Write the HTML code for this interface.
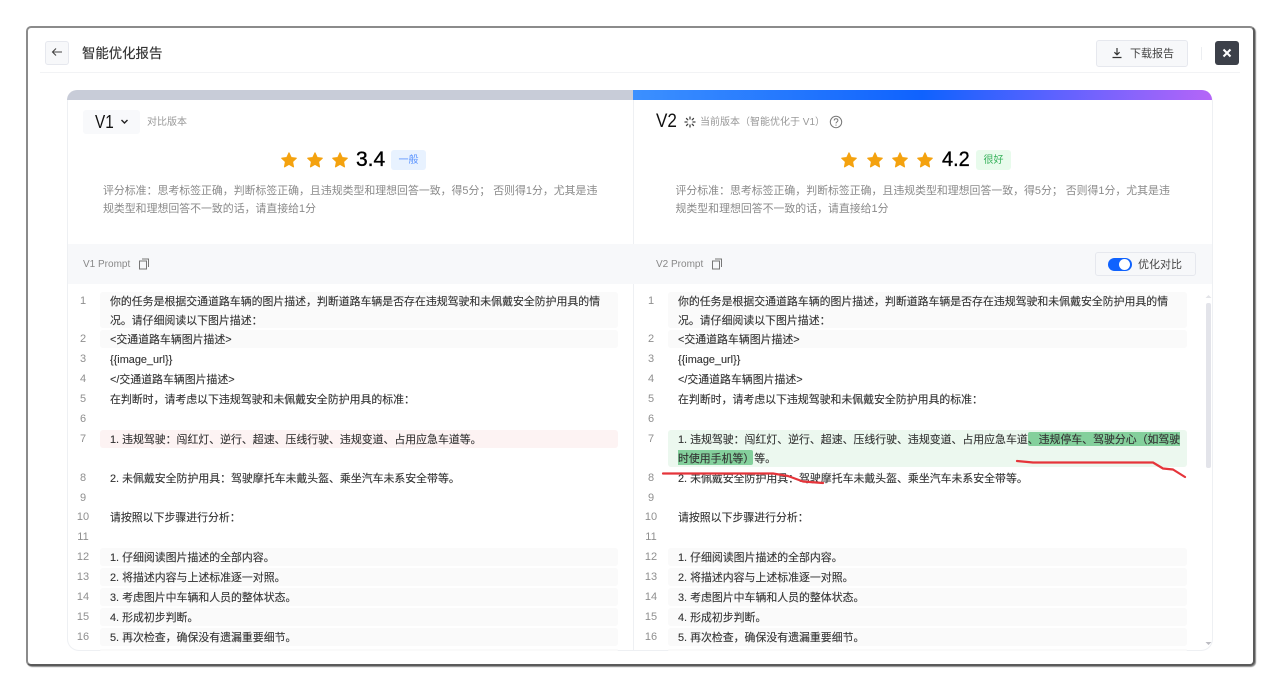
<!DOCTYPE html>
<html lang="zh"><head><meta charset="utf-8"><title>智能优化报告</title>
<style>
*{box-sizing:border-box;margin:0;padding:0}
html,body{width:1280px;height:691px;background:#fff;overflow:hidden}
body{position:relative;font-family:"Liberation Sans","Noto Sans CJK SC",sans-serif;color:#333}
.a{position:absolute;white-space:nowrap}
#win{position:absolute;left:26px;top:26px;width:1229px;height:640px;background:#fff;border:2px solid #8b8b8b;border-right-color:#5a5a5a;border-bottom-color:#5a5a5a;border-radius:5px;box-shadow:1px 1px 1px #888}
.btn{background:#f7f8fa;border:1px solid #e6e8ee;border-radius:3px}
#panel{position:absolute;left:67px;top:90px;width:1146px;height:561px;border:1px solid #eef0f3;border-top:0;border-radius:12px;overflow:hidden;background:#fff}
.t{font-size:10.9px;line-height:20px;color:#333;margin-top:1px;-webkit-text-stroke:.12px #333}
.n{font-size:11px;line-height:20px;color:#8f8f8f;width:24px;text-align:center;margin-top:1px}
.r{position:absolute;background:#fafafa;border-radius:3px}
.c{font-size:10.9px;line-height:20px;color:#8a8a8a}
.star{position:absolute;top:151px;width:18px;height:18px}
.big{font-size:21px;line-height:24px;color:#000;-webkit-text-stroke:.35px #000}
</style></head><body>
<div id="win"></div>

<div class="a btn" style="left:45px;top:41px;width:24px;height:24px"></div>
<svg class="a" style="left:51px;top:46px" width="12" height="12" viewBox="0 0 12 12" fill="none" stroke="#444" stroke-width="1.1"><path d="M11 6H1.500M5 2.500L1.500 6 5 9.500"/></svg>
<div class="a" style="left:82px;top:44px;font-size:13.4px;line-height:20px;color:#333;-webkit-text-stroke:.15px #333">智能优化报告</div>
<div class="a" style="left:40px;top:72px;width:1200px;height:1px;background:#f2f3f5"></div>

<div class="a btn" style="left:1096px;top:40px;width:92px;height:27px"></div>
<svg class="a" style="left:1111px;top:47px" width="12" height="12" viewBox="0 0 12 12" fill="none" stroke="#333" stroke-width="1.2"><path d="M6 1v6.500M3.400 5.200L6 7.800l2.600-2.600M1.500 10.500h9"/></svg>
<div class="a" style="left:1130px;top:44px;font-size:11px;line-height:20px;color:#444">下载报告</div>
<div class="a" style="left:1201px;top:47px;width:1px;height:13px;background:#eceef1"></div>
<div class="a" style="left:1215px;top:41px;width:24px;height:24px;background:#3c4049;border-radius:3px"></div>
<svg class="a" style="left:1222px;top:48px" width="10" height="10" viewBox="0 0 10 10" stroke="#fff" stroke-width="2"><path d="M1.500 1.500l7 7M8.500 1.500l-7 7"/></svg>

<div id="panel"></div>
<div class="a" style="left:67px;top:90px;width:566px;height:10px;background:#c8ccd8;border-radius:12px 0 0 0"></div>
<div class="a" style="left:633px;top:90px;width:579px;height:10px;background:linear-gradient(90deg,#3c90ff 0%,#0f62fe 50%,#5a62ff 72%,#b565f8 100%);border-radius:0 12px 0 0"></div>
<div class="a" style="left:633px;top:100px;width:1px;height:551px;background:#eef0f3"></div>
<div class="a" style="left:68px;top:244px;width:1144px;height:40px;background:#f7f8fa"></div>

<!-- left head -->
<div class="a" style="left:83px;top:110px;width:57px;height:24px;background:#f8f9fb;border-radius:3px"></div>
<div class="a" style="left:95px;top:110px;font-size:18px;line-height:24px;color:#111;transform:scaleX(.85);transform-origin:left center">V1</div>
<svg class="a" style="left:120px;top:118px" width="9" height="8" viewBox="0 0 9 8" fill="none" stroke="#222" stroke-width="1.4"><path d="M1.500 2l3 3 3-3"/></svg>
<div class="a" style="left:147px;top:113px;font-size:10px;line-height:20px;color:#999">对比版本</div>

<svg class="star" style="left:280px" viewBox="0 0 24 24"><path fill="#f4a20f" stroke="#f4a20f" stroke-width="1.500" stroke-linejoin="round" d="M12 2.500l2.900 6.300 6.800.8-5 4.700 1.300 6.800-6-3.400-6 3.400 1.300-6.800-5-4.700 6.800-.8z"/></svg>
<svg class="star" style="left:306px" viewBox="0 0 24 24"><path fill="#f4a20f" stroke="#f4a20f" stroke-width="1.500" stroke-linejoin="round" d="M12 2.500l2.900 6.300 6.800.8-5 4.700 1.300 6.800-6-3.400-6 3.400 1.300-6.800-5-4.700 6.800-.8z"/></svg>
<svg class="star" style="left:331px" viewBox="0 0 24 24"><path fill="#f4a20f" stroke="#f4a20f" stroke-width="1.500" stroke-linejoin="round" d="M12 2.500l2.900 6.300 6.800.8-5 4.700 1.300 6.800-6-3.400-6 3.400 1.300-6.800-5-4.700 6.800-.8z"/></svg>
<div class="a big" style="left:356px;top:148px">3.4</div>
<div class="a" style="left:391px;top:150px;width:35px;height:20px;background:#e8f2ff;border-radius:3px;font-size:10px;line-height:21px;text-align:center;color:#5a93ff">一般</div>
<div class="a c" style="left:103px;top:181px">评分标准：思考标签正确，判断标签正确，且违规类型和理想回答一致，得5分； 否则得1分，尤其是违</div>
<div class="a c" style="left:103px;top:199px">规类型和理想回答不一致的话，请直接给1分</div>

<!-- right head -->
<div class="a" style="left:656px;top:110px;font-size:19px;line-height:24px;color:#111;transform:scaleX(.9);transform-origin:left center">V2</div>
<svg class="a" style="left:684px;top:116px" width="12" height="12" viewBox="0 0 12 12" stroke="#444" stroke-width="1.300" stroke-linecap="round"><path d="M6 1v2M6 9v2M1 6h2M9 6h2M2.500 2.500l1.300 1.300M8.200 8.200l1.300 1.300M9.500 2.500L8.200 3.800M3.800 8.200L2.500 9.500"/></svg>
<div class="a" style="left:700px;top:113px;font-size:10px;line-height:20px;color:#999">当前版本（智能优化于 V1）</div>
<svg class="a" style="left:829px;top:115px" width="14" height="14" viewBox="0 0 14 14" fill="none" stroke="#777" stroke-width="1"><circle cx="7" cy="7" r="5.700"/><path d="M5.200 5.500c0-2.300 3.700-2.300 3.700 0 0 1.400-1.900 1.400-1.900 2.900M7 9.600v1"/></svg>

<svg class="star" style="left:840px" viewBox="0 0 24 24"><path fill="#f4a20f" stroke="#f4a20f" stroke-width="1.500" stroke-linejoin="round" d="M12 2.500l2.900 6.300 6.800.8-5 4.700 1.300 6.800-6-3.400-6 3.400 1.300-6.800-5-4.700 6.800-.8z"/></svg>
<svg class="star" style="left:866px" viewBox="0 0 24 24"><path fill="#f4a20f" stroke="#f4a20f" stroke-width="1.500" stroke-linejoin="round" d="M12 2.500l2.900 6.300 6.800.8-5 4.700 1.300 6.800-6-3.400-6 3.400 1.300-6.800-5-4.700 6.800-.8z"/></svg>
<svg class="star" style="left:891px" viewBox="0 0 24 24"><path fill="#f4a20f" stroke="#f4a20f" stroke-width="1.500" stroke-linejoin="round" d="M12 2.500l2.900 6.300 6.800.8-5 4.700 1.300 6.800-6-3.400-6 3.400 1.300-6.800-5-4.700 6.800-.8z"/></svg>
<svg class="star" style="left:916px" viewBox="0 0 24 24"><path fill="#f4a20f" stroke="#f4a20f" stroke-width="1.500" stroke-linejoin="round" d="M12 2.500l2.900 6.300 6.800.8-5 4.700 1.300 6.800-6-3.400-6 3.400 1.300-6.800-5-4.700 6.800-.8z"/></svg>
<div class="a big" style="left:942px;top:148px;transform:scaleX(.95);transform-origin:left center">4.2</div>
<div class="a" style="left:976px;top:150px;width:35px;height:20px;background:#e8fbec;border-radius:3px;font-size:10px;line-height:21px;text-align:center;color:#38b25c">很好</div>
<div class="a c" style="left:675.500px;top:181px">评分标准：思考标签正确，判断标签正确，且违规类型和理想回答一致，得5分； 否则得1分，尤其是违</div>
<div class="a c" style="left:675.500px;top:199px">规类型和理想回答不一致的话，请直接给1分</div>

<!-- prompt bars -->
<div class="a" style="left:83px;top:255px;font-size:10px;line-height:20px;color:#888">V1 Prompt</div>
<svg class="a" style="left:138px;top:258px" width="12" height="12" viewBox="0 0 12 12" fill="none" stroke="#777" stroke-width="1"><rect x="1.500" y="3" width="7" height="8"/><path d="M4 1h6.500v8"/></svg>
<div class="a" style="left:656px;top:255px;font-size:10px;line-height:20px;color:#888">V2 Prompt</div>
<svg class="a" style="left:711px;top:258px" width="12" height="12" viewBox="0 0 12 12" fill="none" stroke="#777" stroke-width="1"><rect x="1.500" y="3" width="7" height="8"/><path d="M4 1h6.500v8"/></svg>
<div class="a btn" style="left:1095px;top:252px;width:101px;height:24px"></div>
<div class="a" style="left:1108px;top:258px;width:24px;height:13px;border-radius:7px;background:#0f62fe"></div>
<div class="a" style="left:1119px;top:259px;width:11px;height:11px;border-radius:50%;background:#fff"></div>
<div class="a" style="left:1138px;top:255px;font-size:11px;line-height:20px;color:#444">优化对比</div>

<!-- left rows -->
<div class="r" style="left:100px;top:292px;width:518px;height:36px"></div>
<div class="r" style="left:100px;top:330px;width:518px;height:18px"></div>
<div class="r" style="left:100px;top:430px;width:518px;height:18px;background:#fdf3f3"></div>
<div class="r" style="left:100px;top:548px;width:518px;height:18px"></div>
<div class="r" style="left:100px;top:568px;width:518px;height:18px"></div>
<div class="r" style="left:100px;top:588px;width:518px;height:18px"></div>
<div class="r" style="left:100px;top:608px;width:518px;height:18px"></div>
<div class="r" style="left:100px;top:628px;width:518px;height:18px"></div>
<div class="r" style="left:100px;top:649px;width:518px;height:2px"></div>

<!-- right rows -->
<div class="r" style="left:668px;top:292px;width:519px;height:36px"></div>
<div class="r" style="left:668px;top:330px;width:519px;height:18px"></div>
<div class="r" style="left:668px;top:430px;width:519px;height:37px;background:#ecf8ef"></div>
<div class="a" style="left:1028px;top:432px;width:152px;height:14px;background:#84d09c;border-radius:2px 0 0 2px"></div>
<div class="a" style="left:678px;top:450px;width:75px;height:15px;background:#84d09c;border-radius:0 2px 2px 0"></div>
<div class="r" style="left:668px;top:548px;width:519px;height:18px"></div>
<div class="r" style="left:668px;top:568px;width:519px;height:18px"></div>
<div class="r" style="left:668px;top:588px;width:519px;height:18px"></div>
<div class="r" style="left:668px;top:608px;width:519px;height:18px"></div>
<div class="r" style="left:668px;top:628px;width:519px;height:18px"></div>
<div class="r" style="left:668px;top:649px;width:519px;height:2px"></div>

<!-- left numbers -->
<div class="a n" style="left:71px;top:290px">1</div>
<div class="a n" style="left:71px;top:328px">2</div>
<div class="a n" style="left:71px;top:348px">3</div>
<div class="a n" style="left:71px;top:368px">4</div>
<div class="a n" style="left:71px;top:388px">5</div>
<div class="a n" style="left:71px;top:408px">6</div>
<div class="a n" style="left:71px;top:428px">7</div>
<div class="a n" style="left:71px;top:467px">8</div>
<div class="a n" style="left:71px;top:487px">9</div>
<div class="a n" style="left:71px;top:506px">10</div>
<div class="a n" style="left:71px;top:526px">11</div>
<div class="a n" style="left:71px;top:546px">12</div>
<div class="a n" style="left:71px;top:566px">13</div>
<div class="a n" style="left:71px;top:586px">14</div>
<div class="a n" style="left:71px;top:606px">15</div>
<div class="a n" style="left:71px;top:626px">16</div>

<!-- right numbers -->
<div class="a n" style="left:639px;top:290px">1</div>
<div class="a n" style="left:639px;top:328px">2</div>
<div class="a n" style="left:639px;top:348px">3</div>
<div class="a n" style="left:639px;top:368px">4</div>
<div class="a n" style="left:639px;top:388px">5</div>
<div class="a n" style="left:639px;top:408px">6</div>
<div class="a n" style="left:639px;top:428px">7</div>
<div class="a n" style="left:639px;top:467px">8</div>
<div class="a n" style="left:639px;top:487px">9</div>
<div class="a n" style="left:639px;top:506px">10</div>
<div class="a n" style="left:639px;top:526px">11</div>
<div class="a n" style="left:639px;top:546px">12</div>
<div class="a n" style="left:639px;top:566px">13</div>
<div class="a n" style="left:639px;top:586px">14</div>
<div class="a n" style="left:639px;top:606px">15</div>
<div class="a n" style="left:639px;top:626px">16</div>

<!-- left text -->
<div class="a t" style="left:110px;top:291px">你的任务是根据交通道路车辆的图片描述，判断道路车辆是否存在违规驾驶和未佩戴安全防护用具的情</div>
<div class="a t" style="left:110px;top:310px">况。请仔细阅读以下图片描述：</div>
<div class="a t" style="left:110px;top:329px">&lt;交通道路车辆图片描述&gt;</div>
<div class="a t" style="left:110px;top:349px">{{image_url}}</div>
<div class="a t" style="left:110px;top:369px">&lt;/交通道路车辆图片描述&gt;</div>
<div class="a t" style="left:110px;top:389px">在判断时，请考虑以下违规驾驶和未佩戴安全防护用具的标准：</div>
<div class="a t" style="left:110px;top:429px">1. 违规驾驶：闯红灯、逆行、超速、压线行驶、违规变道、占用应急车道等。</div>
<div class="a t" style="left:110px;top:468px">2. 未佩戴安全防护用具：驾驶摩托车未戴头盔、乘坐汽车未系安全带等。</div>
<div class="a t" style="left:110px;top:507px">请按照以下步骤进行分析：</div>
<div class="a t" style="left:110px;top:547px">1. 仔细阅读图片描述的全部内容。</div>
<div class="a t" style="left:110px;top:567px">2. 将描述内容与上述标准逐一对照。</div>
<div class="a t" style="left:110px;top:587px">3. 考虑图片中车辆和人员的整体状态。</div>
<div class="a t" style="left:110px;top:607px">4. 形成初步判断。</div>
<div class="a t" style="left:110px;top:627px">5. 再次检查，确保没有遗漏重要细节。</div>

<!-- right text -->
<div class="a t" style="left:678px;top:291px">你的任务是根据交通道路车辆的图片描述，判断道路车辆是否存在违规驾驶和未佩戴安全防护用具的情</div>
<div class="a t" style="left:678px;top:310px">况。请仔细阅读以下图片描述：</div>
<div class="a t" style="left:678px;top:329px">&lt;交通道路车辆图片描述&gt;</div>
<div class="a t" style="left:678px;top:349px">{{image_url}}</div>
<div class="a t" style="left:678px;top:369px">&lt;/交通道路车辆图片描述&gt;</div>
<div class="a t" style="left:678px;top:389px">在判断时，请考虑以下违规驾驶和未佩戴安全防护用具的标准：</div>
<div class="a t" style="left:678px;top:429px">1. 违规驾驶：闯红灯、逆行、超速、压线行驶、违规变道、占用应急车道、违规停车、驾驶分心（如驾驶</div>
<div class="a t" style="left:678px;top:448px">时使用手机等）等。</div>
<div class="a t" style="left:678px;top:468px">2. 未佩戴安全防护用具：驾驶摩托车未戴头盔、乘坐汽车未系安全带等。</div>
<div class="a t" style="left:678px;top:507px">请按照以下步骤进行分析：</div>
<div class="a t" style="left:678px;top:547px">1. 仔细阅读图片描述的全部内容。</div>
<div class="a t" style="left:678px;top:567px">2. 将描述内容与上述标准逐一对照。</div>
<div class="a t" style="left:678px;top:587px">3. 考虑图片中车辆和人员的整体状态。</div>
<div class="a t" style="left:678px;top:607px">4. 形成初步判断。</div>
<div class="a t" style="left:678px;top:627px">5. 再次检查，确保没有遗漏重要细节。</div>

<!-- scrollbar -->
<div class="a" style="left:1206px;top:303px;width:5px;height:165px;background:#e3e4ea;border-radius:2px"></div>
<svg class="a" style="left:1205px;top:294px" width="7" height="5" viewBox="0 0 7 5"><path d="M3.500 1L6.500 4H.5z" fill="#e3e4e8"/></svg>
<svg class="a" style="left:1205px;top:641px" width="7" height="5" viewBox="0 0 7 5"><path d="M3.500 4L6.500 1H.5z" fill="#bcbcc2"/></svg>

<!-- red annotation strokes -->
<svg class="a" style="left:0;top:0" width="1280" height="691" fill="none" stroke="#e5343a" stroke-width="2.200" stroke-linecap="round" stroke-linejoin="round">
<path d="M1017 461L1033 462.500H1153L1163 468.500L1173 469.500L1185 477"/>
<path d="M663 473.500H773L788 476L803 481.500L823 483"/>
</svg>
</body></html>
